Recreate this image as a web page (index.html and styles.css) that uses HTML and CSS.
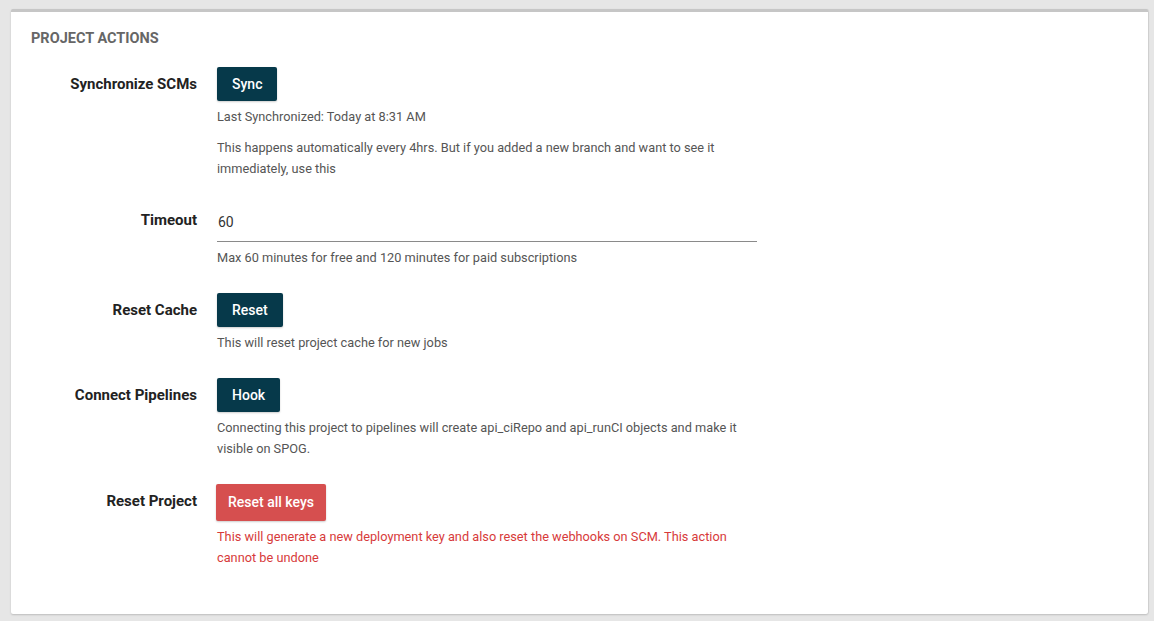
FILE: index.html
```html
<!DOCTYPE html>
<html>
<head>
<meta charset="utf-8">
<link rel="stylesheet" href="styles.css">
</head>
<body>
<div class="page">
  <section class="card">
    <h2 class="title">PROJECT ACTIONS</h2>
    <div class="rows">
      <div class="row">
        <div class="label">Synchronize SCMs</div>
        <div class="content">
          <button class="btn">Sync</button>
          <p class="help first">Last Synchronized: Today at 8:31 AM</p>
          <p class="help next">This happens automatically every 4hrs. But if you added a new branch and want to see it immediately, use this</p>
        </div>
      </div>
      <div class="row">
        <div class="label label-input">Timeout</div>
        <div class="content">
          <div class="input">60</div>
          <p class="help first">Max 60 minutes for free and 120 minutes for paid subscriptions</p>
        </div>
      </div>
      <div class="row">
        <div class="label">Reset Cache</div>
        <div class="content">
          <button class="btn">Reset</button>
          <p class="help first">This will reset project cache for new jobs</p>
        </div>
      </div>
      <div class="row">
        <div class="label">Connect Pipelines</div>
        <div class="content">
          <button class="btn">Hook</button>
          <p class="help first">Connecting this project to pipelines will create api_ciRepo and api_runCI objects and make it visible on SPOG.</p>
        </div>
      </div>
      <div class="row">
        <div class="label">Reset Project</div>
        <div class="content">
          <button class="btn btn-danger">Reset all keys</button>
          <p class="help first danger">This will generate a new deployment key and also reset the webhooks on SCM. This action cannot be undone</p>
        </div>
      </div>
    </div>
  </section>
</div>
</body>
</html>
```

FILE: styles.css
```css
html, body {
  margin: 0;
  padding: 0;
  background: #e6e6e6;
}
body {
  font-family: Roboto, "Liberation Sans", Arial, sans-serif;
  color: #333;
}
.page {
  padding: 9px 6px 7px 11px;
}
.card {
  background: #fff;
  border-top: 3px solid #c6c6c6;
  border-radius: 2px;
  box-shadow: 0 1px 2px rgba(0,0,0,0.18), 1px 0 1px rgba(0,0,0,0.06);
  padding: 19px 20px 45px 20px;
  height: 605px;
  box-sizing: border-box;
}
.title {
  margin: 0;
  font-size: 14.5px;
  line-height: 16px;
  font-weight: 700;
  color: #666;
}
.rows {
  display: flex;
  flex-direction: column;
  gap: 25.5px;
  margin-top: 20px;
}
.row {
  display: grid;
  grid-template-columns: 166px 540px;
  column-gap: 20px;
}
.label {
  text-align: right;
  font-size: 15px;
  font-weight: 700;
  line-height: 34px;
  color: #222;
}
.label-input {
  line-height: 32px;
}
.content {
  display: flex;
  flex-direction: column;
  align-items: flex-start;
}
.btn {
  font-family: inherit;
  font-size: 14px;
  font-weight: 500;
  color: #fff;
  background: #06394a;
  border: none;
  border-radius: 2px;
  height: 34px;
  padding: 0 15px;
  line-height: 34px;
  box-shadow: 0 1px 2px rgba(0,0,0,0.2);
  cursor: pointer;
}
.btn-danger {
  background: #d64f4f;
  height: 37px;
  line-height: 37px;
  padding: 0 12px;
  font-size: 14px;
  margin-left: -1px;
}
.input {
  width: 539px;
  height: 37px;
  border-bottom: 1px solid #8a8a8a;
  font-size: 14px;
  line-height: 37px;
  color: #333;
  padding-left: 1px;
  box-sizing: content-box;
}
.help {
  margin: 0;
  font-size: 12.75px;
  line-height: 21px;
  color: #555;
}
.help.first {
  margin-top: 4.5px;
}
.help.next {
  margin-top: 10px;
}
.help.danger {
  color: #d73a3a;
}
```
